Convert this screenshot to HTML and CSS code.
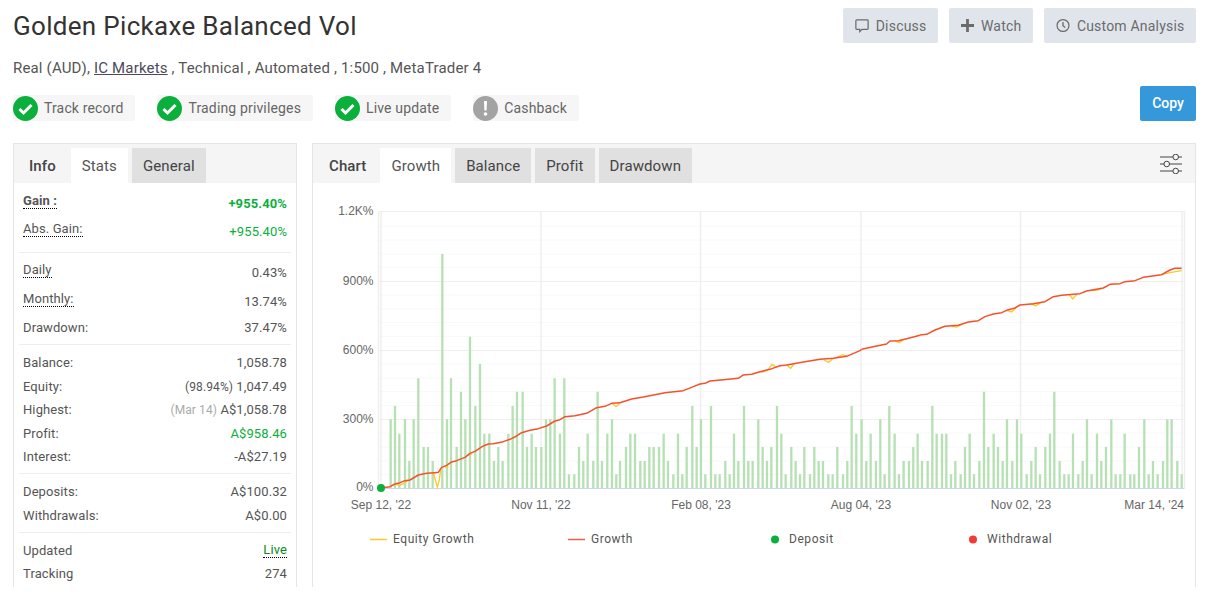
FILE: index.html
```html
<!DOCTYPE html>
<html>
<head>
    <meta charset="utf-8">
    <title>Golden Pickaxe Balanced Vol</title>
    <link rel="stylesheet" href="styles.css">
</head>
<body>
    <div class="page">
        <div class="head-row">
            <h1 class="title">Golden Pickaxe Balanced Vol</h1>
            <div class="actions">
                <a class="action-btn">
                    <svg class="action-icon" viewBox="0 0 16 16"><path d="M2 1.500h12a1 1 0 0 1 1 1v9a1 1 0 0 1-1 1H8l-2.500 2.500v-2.500H2a1 1 0 0 1-1-1v-9a1 1 0 0 1 1-1z" fill="none" stroke="#6b6b6b" stroke-width="1.400"/></svg>
                    Discuss
                </a>
                <a class="action-btn">
                    <svg class="action-icon plus" viewBox="0 0 14 14"><path d="M7 0v14M0 7h14" fill="none" stroke="#6b6b6b" stroke-width="3"/></svg>
                    Watch
                </a>
                <a class="action-btn">
                    <svg class="action-icon" viewBox="0 0 16 16"><circle cx="8" cy="8" r="6.800" fill="none" stroke="#6b6b6b" stroke-width="1.400"/><path d="M8 4v4.300l2.500 2" fill="none" stroke="#6b6b6b" stroke-width="1.500"/></svg>
                    Custom Analysis
                </a>
            </div>
        </div>

        <p class="subtitle">Real (AUD), <a class="broker">IC Markets</a> , Technical , Automated , 1:500 , MetaTrader 4</p>

        <div class="badge-row">
            <div class="badges">
                <div class="badge">
                    <svg class="badge-icon" viewBox="0 0 25 25"><circle cx="12.500" cy="12.500" r="12.500" fill="#0bb03c"/><path d="M6.500 13l4 4 8-8" fill="none" stroke="#fff" stroke-width="3"/></svg>
                    Track record
                </div>
                <div class="badge">
                    <svg class="badge-icon" viewBox="0 0 25 25"><circle cx="12.500" cy="12.500" r="12.500" fill="#0bb03c"/><path d="M6.500 13l4 4 8-8" fill="none" stroke="#fff" stroke-width="3"/></svg>
                    Trading privileges
                </div>
                <div class="badge">
                    <svg class="badge-icon" viewBox="0 0 25 25"><circle cx="12.500" cy="12.500" r="12.500" fill="#0bb03c"/><path d="M6.500 13l4 4 8-8" fill="none" stroke="#fff" stroke-width="3"/></svg>
                    Live update
                </div>
                <div class="badge">
                    <svg class="badge-icon" viewBox="0 0 25 25"><circle cx="12.500" cy="12.500" r="12.500" fill="#a3a3a3"/><path d="M11 5h3l-.4 9.500h-2.200z" fill="#fff"/><circle cx="12.500" cy="18" r="1.800" fill="#fff"/></svg>
                    Cashback
                </div>
            </div>
            <a class="copy-btn">Copy</a>
        </div>

        <div class="panels">
            <!-- stats -->
            <section class="panel">
                <div class="tabs">
                    <span class="tab-label">Info</span>
                    <span class="tab active">Stats</span>
                    <span class="tab">General</span>
                </div>
                <div class="stats">
                    <div class="group group-gain">
                        <div class="stat"><span class="key tip strong">Gain :</span><span class="val up strong">+955.40%</span></div>
                        <div class="stat"><span class="key tip">Abs. Gain:</span><span class="val up">+955.40%</span></div>
                    </div>
                    <div class="group group-rates">
                        <div class="stat"><span class="key tip">Daily</span><span class="val">0.43%</span></div>
                        <div class="stat"><span class="key tip">Monthly:</span><span class="val">13.74%</span></div>
                        <div class="stat"><span class="key">Drawdown:</span><span class="val">37.47%</span></div>
                    </div>
                    <div class="group">
                        <div class="stat"><span class="key">Balance:</span><span class="val">1,058.78</span></div>
                        <div class="stat"><span class="key">Equity:</span><span class="val"><span class="note">(98.94%)</span> 1,047.49</span></div>
                        <div class="stat"><span class="key">Highest:</span><span class="val"><span class="note muted">(Mar 14)</span> A$1,058.78</span></div>
                        <div class="stat"><span class="key">Profit:</span><span class="val up">A$958.46</span></div>
                        <div class="stat"><span class="key">Interest:</span><span class="val">-A$27.19</span></div>
                    </div>
                    <div class="group">
                        <div class="stat"><span class="key">Deposits:</span><span class="val">A$100.32</span></div>
                        <div class="stat"><span class="key">Withdrawals:</span><span class="val">A$0.00</span></div>
                    </div>
                    <div class="group">
                        <div class="stat"><span class="key">Updated</span><span class="val live">Live</span></div>
                        <div class="stat"><span class="key">Tracking</span><span class="val">274</span></div>
                    </div>
                </div>
            </section>

            <!-- chart -->
            <section class="panel">
                <div class="tabs chart-tabs">
                    <span class="tab-label">Chart</span>
                    <span class="tab active">Growth</span>
                    <span class="tab">Balance</span>
                    <span class="tab">Profit</span>
                    <span class="tab">Drawdown</span>
                    <svg class="sliders" viewBox="0 0 22 20">
                        <path d="M0 3h22M0 10h22M0 17h22" stroke="#444" stroke-width="1" fill="none"/>
                        <circle cx="15.700" cy="3" r="2.800" fill="#f5f5f5" stroke="#444"/>
                        <circle cx="6.700" cy="10" r="2.800" fill="#f5f5f5" stroke="#444"/>
                        <circle cx="15.700" cy="17" r="2.800" fill="#f5f5f5" stroke="#444"/>
                    </svg>
                </div>
                <svg class="chart" viewBox="313 183 882 403">
                    <!-- minor grid -->
                    <path class="grid-minor" d="M378.500 226H1184.500M378.500 240H1184.500M378.500 254H1184.500M378.500 267.500H1184.500M378.500 295H1184.500M378.500 309H1184.500M378.500 322.500H1184.500M378.500 336.500H1184.500M378.500 364H1184.500M378.500 378H1184.500M378.500 391.500H1184.500M378.500 405.500H1184.500M378.500 433H1184.500M378.500 447H1184.500M378.500 461H1184.500M378.500 474.500H1184.500"/>
                    <path class="grid-major" d="M378.500 211.500H1184.500M378.500 281.500H1184.500M378.500 350.500H1184.500M378.500 419.500H1184.500"/>
                    <path class="grid-major grid-v" d="M378.500 211.500V488M381 211.500V488M541 211.500V488M700.500 211.500V488M861 211.500V488M1020.500 211.500V488M1182 211.500V488M1184.500 211.500V488"/>

                    <!-- bars, drawn in 3x coordinates -->
                    <g transform="translate(320 350) scale(.3333)">
                        <path class="bars" d="M212 415V208M225 415V168M238 415V251M255 415V208M268 415V333M281 415V208M295 415V85M311 415V291M324 415V291M338 415V333M367 415V-288M381 415V208M393 415V85M410 415V291M423 415V125M436 415V208M450 415V-40M466 415V168M480 415V42M493 415V251M508 415V251M522 415V333M535 415V291M548 415V333M565 415V251M578 415V168M591 415V125M608 415V125M621 415V291M635 415V251M648 415V291M664 415V291M678 415V208M691 415V208M704 415V85M720 415V251M733 415V85M747 415V373M763 415V373M777 415V291M790 415V333M803 415V251M820 415V333M833 415V125M846 415V333M862 415V251M876 415V208M889 415V373"/>
                    </g>
                    <g transform="translate(620 350) scale(.3333)">
                        <path class="bars" d="M0 415V333M18 415V291M31 415V251M45 415V251M61 415V333M74 415V333M88 415V291M101 415V291M117 415V291M131 415V251M144 415V333M160 415V373M174 415V251M187 415V373M200 415V291M217 415V168M230 415V291M243 415V208M256 415V373M273 415V168M286 415V373M299 415V373M316 415V333M329 415V373M342 415V251M355 415V333M372 415V168M385 415V333M398 415V333M415 415V208M428 415V291M441 415V333M454 415V291M471 415V168M484 415V251M497 415V373M514 415V291M527 415V333M540 415V373M553 415V291M570 415V373M583 415V291M596 415V333M609 415V333M625 415V373M638 415V373M652 415V291M669 415V373M682 415V333M695 415V168M709 415V251M725 415V208M739 415V333M752 415V251M768 415V333M781 415V208M794 415V373M808 415V168M824 415V251M837 415V373M851 415V333M867 415V333M880 415V291M893 415V251"/>
                    </g>
                    <g transform="translate(910 350) scale(.3333)">
                        <path class="bars" d="M36 415V333M53 415V333M67 415V168M80 415V251M96 415V251M109 415V251M123 415V373M136 415V333M152 415V373M165 415V291M179 415V251M192 415V373M208 415V333M222 415V125M235 415V291M251 415V251M264 415V291M278 415V333M291 415V208M307 415V333M321 415V208M334 415V251M350 415V373M364 415V333M377 415V291M390 415V373M406 415V291M420 415V251M433 415V125M449 415V333M463 415V373M476 415V373M489 415V251M505 415V373M518 415V333M531 415V208M545 415V373M561 415V251M574 415V333M588 415V291M604 415V208M617 415V373M631 415V373M644 415V251M661 415V373M673 415V373M687 415V291M703 415V208M716 415V373M729 415V333M743 415V373M759 415V333M772 415V208M785 415V208M802 415V333M815 415V373"/>
                    </g>
                    <path class="axis" d="M378.500 488.500H1184.500"/>

                    <!-- equity dips -->
                    <g transform="translate(320 350) scale(.3333)">
                        <path class="equity" d="M225 402L240 406L255 398L265 390M340 368L346 390L352 412L358 390L362 358M375 351L385 350M445 316L455 312M875 160L888 170L900 160"/>
                    </g>
                    <g transform="translate(620 350) scale(.3333)">
                        <path class="equity" d="M420 65L430 66L445 58L456 43L470 52L480 47M500 45L512 55L522 42M612 30L626 37L640 25M650 22L668 14L682 19"/>
                    </g>
                    <g transform="translate(620 200) scale(.3333)">
                        <path class="equity" d="M825 422L838 428L850 419"/>
                    </g>
                    <g transform="translate(910 200) scale(.3333)">
                        <path class="equity" d="M125 379L140 381L155 373M290 331L305 336L318 323M362 312L378 317L392 308M478 284L488 297L500 283M545 271L560 271L575 266M755 224L780 218L815 212"/>
                    </g>

                    <!-- growth -->
                    <g transform="translate(320 350) scale(.3333)">
                        <path class="growth" d="M182 414L210 410L225 402L240 398L255 392L270 390L295 375L320 370L345 368L355 367L365 352L380 346L395 336L410 332L435 322L450 310L465 304L490 288L505 282L520 281L550 275L570 268L590 258L605 248L630 241L655 236L680 228L705 213L720 209L735 200L765 197L800 190L830 173L855 169L875 160L900 158"/>
                    </g>
                    <g transform="translate(620 350) scale(.3333)">
                        <path class="growth" d="M0 158L35 147L70 141L135 128L190 122L220 110L240 102L255 100L270 93L310 89L355 85L370 75L395 73L420 65L450 58L480 47L500 45L550 36L600 28L640 25L680 19L720 2L725 -2"/>
                    </g>
                    <g transform="translate(620 200) scale(.3333)">
                        <path class="growth" d="M725 448L770 438L800 432L810 423L835 422L860 416L900 406"/>
                    </g>
                    <g transform="translate(910 200) scale(.3333)">
                        <path class="growth" d="M30 405L50 403L75 390L105 379L145 376L175 366L205 362L225 350L250 342L275 338L290 331L315 324L330 315L370 311L405 305L430 290L455 286L510 281L530 273L580 264L600 253L630 251L645 245L675 242L700 232L755 224L780 210L795 205L815 205"/>
                    </g>
                    <circle cx="381" cy="488" r="4" fill="#0bb03c"/>

                    <g class="axis-text">
                        <text x="373.500" y="215" text-anchor="end">1.2K%</text>
                        <text x="373.500" y="285" text-anchor="end">900%</text>
                        <text x="373.500" y="354" text-anchor="end">600%</text>
                        <text x="373.500" y="423" text-anchor="end">300%</text>
                        <text x="373.500" y="491" text-anchor="end">0%</text>
                        <text x="381" y="509" text-anchor="middle">Sep 12, '22</text>
                        <text x="541" y="509" text-anchor="middle">Nov 11, '22</text>
                        <text x="701" y="509" text-anchor="middle">Feb 08, '23</text>
                        <text x="861" y="509" text-anchor="middle">Aug 04, '23</text>
                        <text x="1021" y="509" text-anchor="middle">Nov 02, '23</text>
                        <text x="1184" y="509" text-anchor="end">Mar 14, '24</text>
                    </g>

                    <!-- legend -->
                    <path d="M370 539.500H387" stroke="#ffc72c" stroke-width="1.500"/>
                    <text class="legend-text" x="393" y="543">Equity Growth</text>
                    <path d="M568 539.500H585" stroke="#f4604c" stroke-width="1.500"/>
                    <text class="legend-text" x="591" y="543">Growth</text>
                    <circle cx="775" cy="539.500" r="4" fill="#0bb03c"/>
                    <text class="legend-text" x="789" y="543">Deposit</text>
                    <circle cx="973" cy="539.500" r="4" fill="#f23b36"/>
                    <text class="legend-text" x="987" y="543">Withdrawal</text>
                </svg>
            </section>
        </div>
    </div>
</body>
</html>
```

FILE: styles.css
```css
* {
    box-sizing: border-box;
}

body {
    margin: 0;
    background: #fff;
    color: #555;
    font-family: Roboto, Arial, sans-serif;
    font-size: 14px;
}

.page {
    padding: 8px 14px 0 13px;
}

/* top row */
.head-row {
    display: flex;
    justify-content: space-between;
    align-items: center;
    height: 35px;
}

.title {
    margin: 0;
    font-size: 26px;
    font-weight: 400;
    color: #333;
    letter-spacing: .31px;
}

.actions {
    display: flex;
    gap: 11px;
}

.action-btn {
    display: flex;
    align-items: center;
    gap: 7px;
    height: 35px;
    padding: 0 11.500px 0 12px;
    background: #e0e5ec;
    border-radius: 2px;
    color: #6b6b6b;
    font-size: 14px;
    letter-spacing: .2px;
}

.action-icon {
    width: 14px;
    height: 15px;
}

.action-icon.plus {
    width: 13px;
    height: 13px;
}

.subtitle {
    margin: 16px 0 0;
    height: 18px;
    line-height: 18px;
    font-size: 15px;
    color: #555;
    letter-spacing: .17px;
}

.broker {
    color: #4a4a5a;
    text-decoration: underline;
}

.badge-row {
    display: flex;
    justify-content: space-between;
    align-items: flex-end;
    margin-top: 9px;
}

.badges {
    display: flex;
    gap: 22px;
}

.badge {
    display: flex;
    align-items: center;
    gap: 6px;
    height: 26px;
    padding-right: 12px;
    background: #f6f6f6;
    border-radius: 2px;
    font-size: 14px;
    color: #666;
    letter-spacing: .15px;
}

.badge-icon {
    width: 25px;
    height: 25px;
}

.copy-btn {
    width: 56px;
    height: 35px;
    line-height: 35px;
    text-align: center;
    background: #3498db;
    border-radius: 2px;
    color: #fff;
    font-weight: 500;
    font-size: 14px;
}

/* panels */
.panels {
    display: grid;
    grid-template-columns: 284px 884px;
    gap: 15px;
    margin-top: 22px;
    height: 444px;
}

.panel {
    border: 1px solid #e5e5e5;
}

.tabs {
    display: flex;
    align-items: flex-end;
    gap: 4px;
    height: 39px;
    background: #f5f5f5;
}

.tab-label,
.tab {
    height: 35px;
    line-height: 37px;
    font-size: 15px;
    letter-spacing: .1px;
}

.tab-label {
    padding: 0 15px;
    color: #444;
    font-weight: 500;
    margin-right: -4px;
}

.chart-tabs .tab-label {
    padding: 0 14px 0 16px;
}

.tab {
    padding: 0 11px;
    background: #e0e0e0;
    color: #444;
}

.tab.active {
    background: #fff;
    color: #555;
}

.sliders {
    width: 22px;
    height: 20px;
    margin: 0 13px 9px auto;
}

/* stats list */
.stats {
    padding: 0 5px;
}

.group {
    padding: 5.750px 4px 4.750px;
    border-bottom: 1px solid #eee;
}

.group:last-child {
    border-bottom: 0;
}

.group-gain {
    padding: 6px 4px;
}

.group-rates {
    padding: 5px 4px 4.500px;
}

.stat {
    display: flex;
    justify-content: space-between;
    align-items: center;
    height: 23.500px;
    font-size: 13px;
    color: #555;
}

.group-gain .stat {
    height: 28.500px;
}

.group-rates .stat {
    height: 29px;
}

.group-rates .stat:last-child {
    height: 23.500px;
}

.key {
    letter-spacing: .1px;
}

.key.tip {
    border-bottom: 1px dotted #000;
    line-height: 14px;
    margin-top: -4px;
}

.val {
    letter-spacing: .1px;
}

.strong {
    font-weight: 700;
}

.val.up {
    color: #0bb03c;
}

.val.live {
    color: #0a8a1a;
    border-bottom: 1px dotted #000;
    line-height: 14px;
}

.note {
    font-size: 12px;
}

.muted {
    color: #aaa;
}

/* chart */
.chart {
    display: block;
    width: 882px;
    height: 403px;
}

.grid-minor {
    stroke: #f8f8f8;
    stroke-width: 1;
    fill: none;
}

.grid-major {
    stroke: #efefef;
    stroke-width: 1;
    fill: none;
}

.grid-v {
    stroke-width: 1.500;
}

.bars {
    stroke: #b7e1b5;
    stroke-width: 7;
    fill: none;
}

.axis {
    stroke: #ccd6eb;
    stroke-width: 1;
    fill: none;
}

.equity {
    stroke: #ffc72c;
    stroke-width: 4;
    fill: none;
}

.growth {
    stroke: #f4512c;
    stroke-width: 4.500;
    stroke-linejoin: round;
    fill: none;
}

.axis-text text {
    font-family: "Liberation Sans", Arial, sans-serif;
    font-size: 12px;
    fill: #666;
}

.legend-text {
    font-family: Roboto, Arial, sans-serif;
    font-size: 12px;
    letter-spacing: .55px;
    fill: #555;
}
```
